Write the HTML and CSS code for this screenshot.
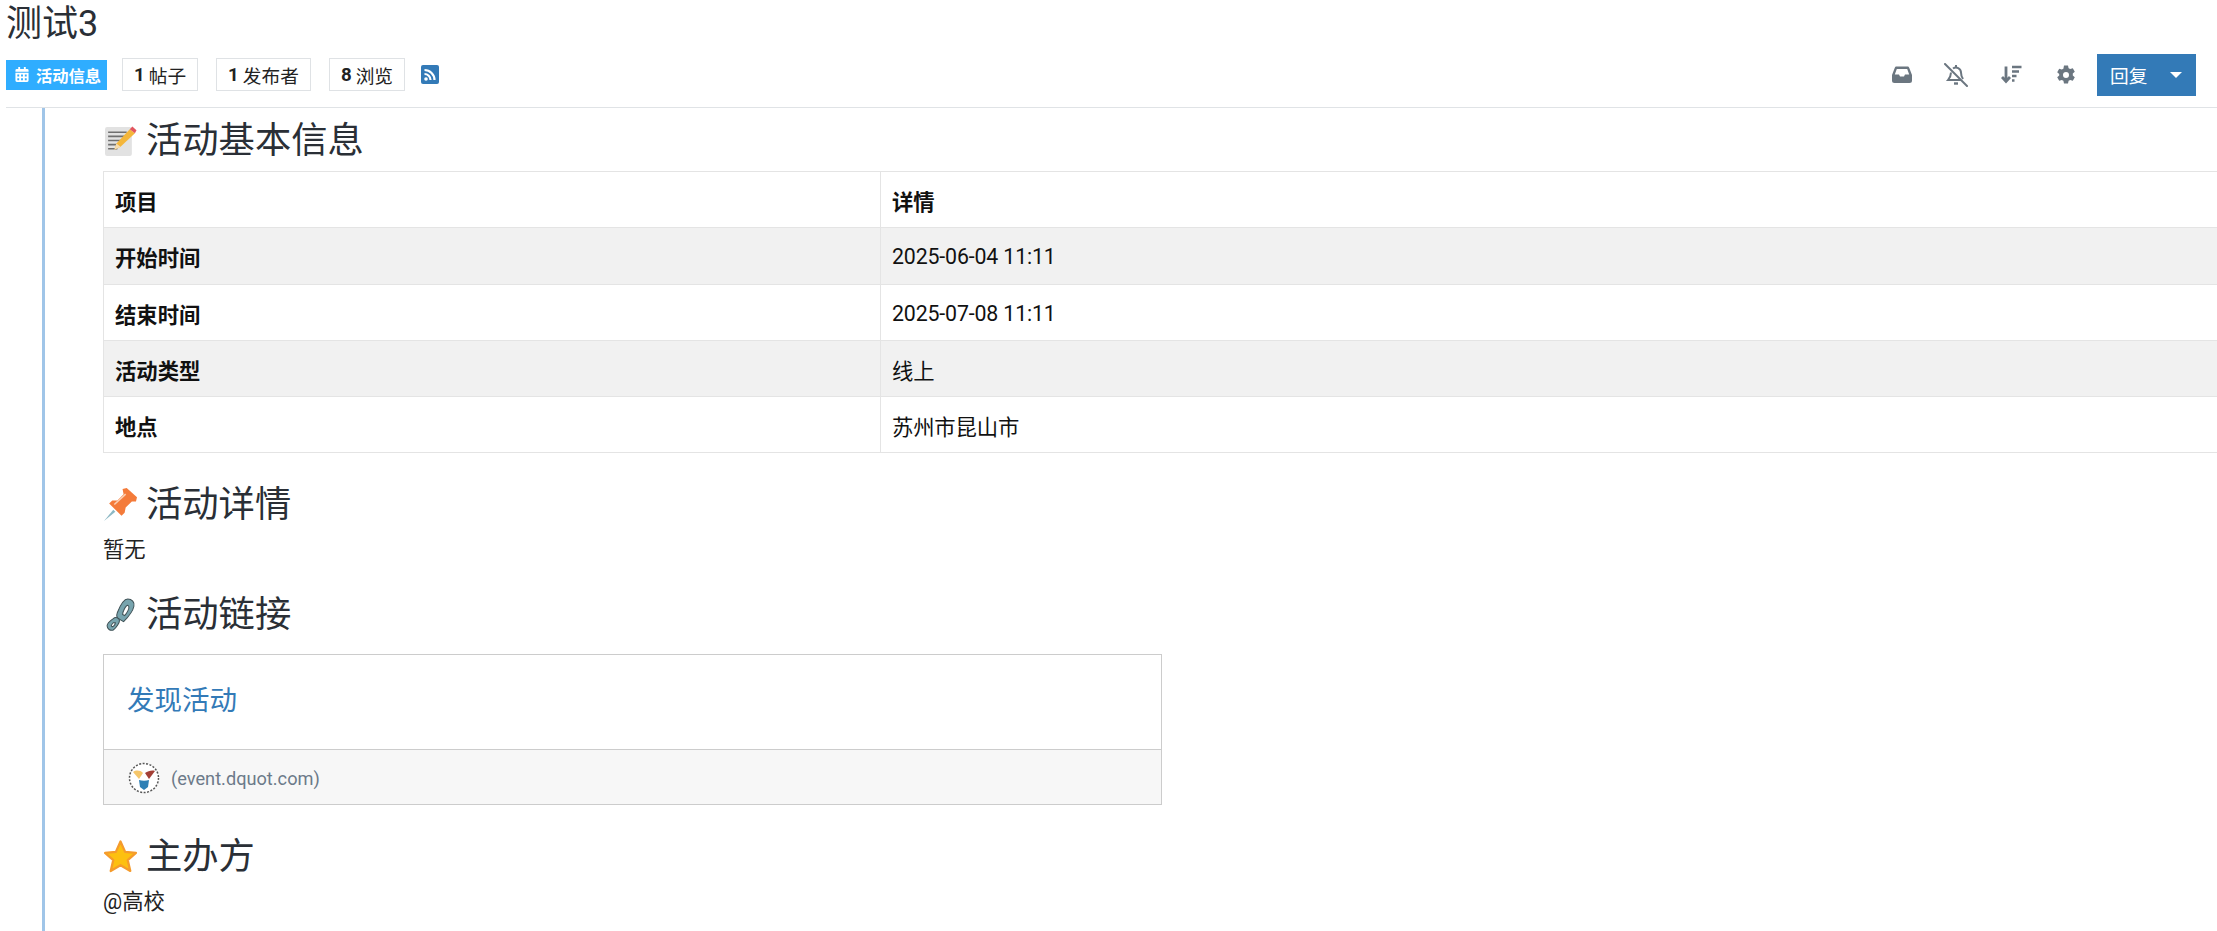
FILE: index.html
```html
<!DOCTYPE html>
<html lang="zh-CN">
<head>
<meta charset="utf-8">
<title>测试3</title>
<link rel="stylesheet" href="styles.css">
</head>
<body>
<header class="topic-head">
  <h1 class="topic-title">测试3</h1>
  <div class="topic-meta">
    <div class="meta-left">
      <a class="tag">
        <svg class="tag-icon" viewBox="0 0 14 16"><path fill="#fff" d="M3 0h2v2h4V0h2v2h1.500A1.500 1.500 0 0 1 14 3.500V5H0V3.500A1.500 1.500 0 0 1 1.500 2H3zM0 6h14v8.500a1.500 1.500 0 0 1-1.500 1.500h-11A1.500 1.500 0 0 1 0 14.500zm2 2v2h2V8zm4 0v2h2V8zm4 0v2h2V8zm-8 4v2h2v-2zm4 0v2h2v-2zm4 0v2h2v-2z"/></svg>
        活动信息</a>
      <span class="stat"><b>1</b> 帖子</span>
      <span class="stat"><b>1</b> 发布者</span>
      <span class="stat"><b>8</b> 浏览</span>
      <span class="rss">
        <svg viewBox="0 0 18 19"><rect width="18" height="19" rx="2" fill="#337ab7"/><circle cx="5" cy="14" r="1.800" fill="#fff"/><path d="M3.500 9a6 6 0 0 1 6 6M3.500 5a10 10 0 0 1 10 10" fill="none" stroke="#fff" stroke-width="2.200"/></svg>
      </span>
    </div>
    <div class="meta-right">
      <svg class="tool tool-inbox" viewBox="0 0 20 18"><path fill="#6b7680" fill-rule="evenodd" d="M4.500 1h11c.8 0 1.400.5 1.700 1.200L20 9.500V15a2.500 2.500 0 0 1-2.500 2.500h-15A2.500 2.500 0 0 1 0 15V9.500l2.800-7.300C3.100 1.500 3.700 1 4.500 1zM4.800 3.500 2.800 9H7l1 2h4l1-2h4.200l-2-5.500z"/></svg>
      <svg class="tool tool-bell" viewBox="0 0 24 24"><path d="M1 1l22 22" stroke="#6b7680" stroke-width="2" stroke-linecap="round"/><path d="M9 5.500A5 5 0 0 1 17 9.500c0 3 1 5 2 6.500M7 9.500c0 3-1 5-3 7.500h13" fill="none" stroke="#6b7680" stroke-width="2"/><path d="M10 20.500h4" stroke="#6b7680" stroke-width="2.400"/><path d="M11 2h2v2.500h-2z" fill="#6b7680"/></svg>
      <svg class="tool tool-sort" viewBox="0 0 21 18"><path d="M5 1v14M1 11.500 5 16l4-4.500" fill="none" stroke="#6b7680" stroke-width="2.800"/><path d="M11 1.500h9.500M11 6h7M11 10.500h4.500M11 15h2.500" stroke="#6b7680" stroke-width="2.600"/></svg>
      <svg class="tool tool-gear" viewBox="0 0 20 20"><path fill="#6b7680" fill-rule="evenodd" d="M8 .5h4l.6 2.700 1.600.9 2.600-.8 2 3.400-2 1.900v1.800l2 1.900-2 3.400-2.600-.8-1.600.9-.6 2.700H8l-.6-2.700-1.600-.9-2.600.8-2-3.400 2-1.900V9.100l-2-1.900 2-3.400 2.600.8 1.600-.9zM10 7a3 3 0 1 0 0 6 3 3 0 0 0 0-6z"/></svg>
      <button class="reply"><span>回复</span><i class="caret"></i></button>
    </div>
  </div>
</header>
<main class="post">
  <h2 class="section-title first">
    <svg class="emoji" viewBox="0 0 32 32"><rect x="1" y="3" width="26" height="28" rx="2" fill="#e2e2e2"/><path d="M4 8h18M4 12h16M4 16h13M4 20h11M4 24h9" stroke="#6f6f6f" stroke-width="1.600"/><path d="M10 25l2-6L25 5l5 4-14 13z" fill="#f4b63a"/><path d="M25 5l2.500-2.500 4 3.500L30 9z" fill="#e2555e"/><path d="M10 25l2-6 4 3z" fill="#f5dcb0"/></svg>
    活动基本信息</h2>
  <table class="info">
    <colgroup><col class="col-key"><col></colgroup>
    <tr><th>项目</th><th>详情</th></tr>
    <tr class="odd"><th>开始时间</th><td>2025-06-04 11:11</td></tr>
    <tr><th>结束时间</th><td>2025-07-08 11:11</td></tr>
    <tr class="odd"><th>活动类型</th><td>线上</td></tr>
    <tr><th>地点</th><td>苏州市昆山市</td></tr>
  </table>
  <h2 class="section-title">
    <svg class="emoji" viewBox="0 0 32 32"><path d="M0 32L9 21l2 2z" fill="#8cb8c4"/><path d="M18 1l4-1 10 9-1 4h-4l-6 6-1 5-3 3L5 15l3-3h5l6-6z" fill="#f47b3a"/><path d="M10 16L21 6" stroke="#fbd0b4" stroke-width="1.500"/></svg>
    活动详情</h2>
  <p class="text">暂无</p>
  <h2 class="section-title">
    <svg class="emoji" viewBox="0 0 32 32"><path d="M23 1c4 0 7 3 6 7-1 5-6 11-10 15l-5-3c-2-1-2-3-1-6 2-5 6-13 10-13zm0 6c-2 0-5 7-5 9l2 1c2-2 5-7 4-9z" fill="#77a4ae" fill-rule="evenodd" stroke="#3f5156" stroke-width="1"/><path d="M9 20c2-2 6-1 6 2 0 2-3 7-6 9-3 1-6-1-6-4 0-2 3-5 6-7zm0 4c-1 1-2 2-2 3l1 1c2-1 3-3 3-4z" fill="#77a4ae" fill-rule="evenodd" stroke="#3f5156" stroke-width="1"/></svg>
    活动链接</h2>
  <article class="onebox">
    <div class="onebox-body"><a class="onebox-link">发现活动</a></div>
    <div class="onebox-foot">
      <svg class="favicon" viewBox="0 0 32 32"><circle cx="16" cy="16" r="14.500" fill="#fff" stroke="#555" stroke-width="1.500" stroke-dasharray="2 1.500"/><path d="M5 10c3-2 7-2 10 1l-4 6z" fill="#f5c66b"/><path d="M17 11c3-2 7-3 10-2l-6 8z" fill="#a33f36"/><path d="M11 18c3 1 7 1 10 0l-1 7-4 3-4-3z" fill="#2d7fb5"/></svg>
      <span class="domain">(event.dquot.com)</span>
    </div>
  </article>
  <h2 class="section-title">
    <svg class="emoji" viewBox="0 0 32 32"><path d="M16 1.500l4.500 10 10.500 1-8 7 2.500 10.500L16 24.500 6.500 30 9 19.500l-8-7 10.500-1z" fill="#fdc010" stroke="#f59b2c" stroke-width="2.200" stroke-linejoin="round"/></svg>
    主办方</h2>
  <p class="text">@高校</p>
</main>
</body>
</html>
```
FILE: styles.css
```css
* { box-sizing: border-box; }
html, body { height: 931px; overflow: hidden; }
body {
  margin: 0;
  background: #fff;
  color: #222;
  font-family: "Roboto", "Noto Sans CJK SC", sans-serif;
  font-size: 21.330px;
}
.topic-head { padding-left: 6px; }
.topic-title {
  margin: 0;
  height: 54px;
  font-size: 36px;
  font-weight: 400;
  line-height: 48px;
  color: #2a2f36;
}
.topic-meta {
  display: flex;
  justify-content: space-between;
  align-items: center;
  height: 54px;
  padding: 0 21px 12px 0;
  border-bottom: 1px solid #e0e3e6;
}
.meta-left, .meta-right { display: flex; align-items: center; }
.tag {
  display: flex;
  align-items: center;
  gap: 7px;
  width: 101px;
  height: 30px;
  padding-left: 9px;
  background: #2fadff;
  color: #fff;
  font-size: 16.300px;
  font-weight: 700;
  white-space: nowrap;
}
.tag-icon { width: 14px; height: 15px; flex: none; }
.stat {
  display: flex;
  align-items: center;
  justify-content: center;
  gap: 4px;
  height: 33px;
  margin-left: 18px;
  padding: 0 11px;
  border: 1px solid #dfe2e5;
  font-size: 18.700px;
  color: #222;
}
.tag + .stat { margin-left: 15px; }
.stat b { font-weight: 700; }
.rss { display: flex; margin-left: 16px; width: 18px; height: 19px; }
.rss svg { width: 18px; height: 19px; }
.tool { display: block; }
.tool-inbox { width: 20px; height: 19px; }
.tool-bell { width: 24px; height: 24px; margin-left: 32px; }
.tool-sort { width: 21px; height: 19px; margin-left: 33px; }
.tool-gear { width: 20px; height: 20px; margin-left: 34px; }
.reply {
  display: flex;
  align-items: center;
  width: 99px;
  height: 42px;
  margin-left: 21px;
  padding: 0 0 0 13px;
  border: 0;
  background: #337ab7;
  color: #fff;
  font: inherit;
  font-size: 18.700px;
}
.caret {
  margin-left: 23px;
  border-top: 6px solid #fff;
  border-left: 6px solid transparent;
  border-right: 6px solid transparent;
}
.post {
  margin-left: 42px;
  width: 2200px;
  height: 823px;
  padding: 6px 0 0 58px;
  border-left: 3px solid #a0c5e8;
}
.section-title {
  display: flex;
  align-items: center;
  gap: 9px;
  height: 46px;
  margin: 23px 0 11px;
  padding-left: 1px;
  font-size: 36.300px;
  font-weight: 400;
  color: #2a2f36;
}
.section-title.first { margin-top: 0; margin-bottom: 11px; }
.emoji { width: 33px; height: 33px; flex: none; margin-top: 7px; }
.info {
  width: 2150px;
  margin-bottom: 25px;
  border-collapse: collapse;
  table-layout: fixed;
  color: #111;
}
.col-key { width: 777px; }
.info th, .info td {
  height: 56.300px;
  padding: 2px 11px 0;
  border: 1px solid #e4e4e4;
  text-align: left;
  font-size: 21.330px;
}
.info th { font-weight: 700; }
.info td { font-weight: 400; letter-spacing: -0.150px; }
.odd { background: #f1f1f1; }
.text { margin: 0; line-height: 30px; color: #222; }
.onebox {
  width: 1059px;
  margin-top: 20px;
  margin-bottom: 25px;
  border: 1px solid #ccc;
}
.onebox-body { height: 94px; padding: 26px 23px 0; }
.onebox-link { font-size: 27.500px; line-height: 40px; color: #337ab7; }
.onebox-foot {
  display: flex;
  align-items: center;
  gap: 11px;
  height: 55px;
  padding: 2px 0 0 24px;
  border-top: 1px solid #ccc;
  background: #f7f7f7;
}
.favicon { width: 32px; height: 32px; }
.domain { font-size: 18.200px; color: #6c7a89; }
```
